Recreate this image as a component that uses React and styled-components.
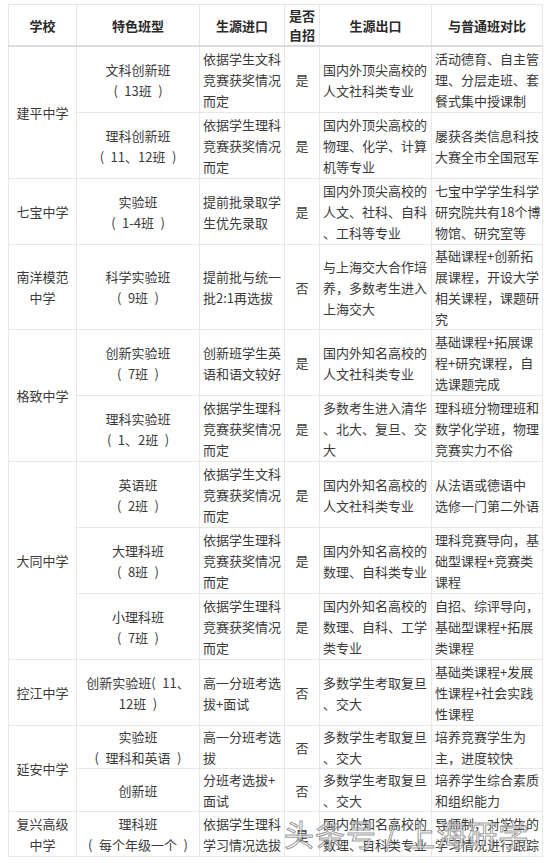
import React from "react";
import styled, { createGlobalStyle } from "styled-components";

const Global = createGlobalStyle`
  html, body { margin: 0; padding: 0; background: #fff; }
  body { font-family: "Noto Sans CJK SC", "Noto Sans", sans-serif; color: #333; }
`;

const Page = styled.div`
  position: relative;
  padding: 4px 8px;
  width: 550px;
  box-sizing: border-box;
`;

const Table = styled.table`
  width: 535px;
  table-layout: fixed;
  border-collapse: collapse;
  font-size: 13px;
  line-height: 21px;
`;

const HeadCell = styled.th`
  border: 1px solid #e6e6e6;
  border-bottom: 2px solid #dcdcdc;
  font-weight: bold;
  color: #2a2a2a;
  line-height: 19px;
  padding: 1px 0;
  text-align: center;
  vertical-align: middle;
  white-space: nowrap;
`;

const Cell = styled.td`
  border: 1px solid #e8e8e8;
  padding: ${(p) => (p.$tight ? "0" : "1px")} ${(p) => (p.$align === "left" ? "3px" : "0")};
  text-align: ${(p) => p.$align || "center"};
  vertical-align: middle;
  white-space: pre;
  color: #3a3a3a;
`;

const Watermark = styled.div`
  position: absolute;
  left: 284px;
  top: 815px;
  font-size: 30px;
  line-height: 36px;
  font-family: "Noto Sans CJK SC", sans-serif;
  font-weight: normal;
  color: rgba(255, 255, 255, 0.6);
  -webkit-text-stroke: 1px rgba(110, 110, 110, 0.7);
  letter-spacing: 1px;
  white-space: nowrap;
  pointer-events: none;
`;

const cols = [68, 123, 85, 35, 112, 111];

const O = "(\u2002";
const C = "\u2002)";

const Lines = ({ t }) =>
  t.split("/").map((l, i, a) => (
    <React.Fragment key={i}>
      {l.replace(/（/g, O).replace(/）/g, C)}
      {i < a.length - 1 && <br />}
    </React.Fragment>
  ));

const rows = [
  { school: "建平中学", span: 2, c: ["文科创新班/（13班）", "依据学生文科/竞赛获奖情况/而定", "是", "国内外顶尖高校的/人文社科类专业", "活动德育、自主管/理、分层走班、套/餐式集中授课制"] },
  { c: ["理科创新班/（11、12班）", "依据学生理科/竞赛获奖情况/而定", "是", "国内外顶尖高校的/物理、化学、计算/机等专业", "屡获各类信息科技/大赛全市全国冠军"] },
  { school: "七宝中学", span: 1, c: ["实验班/（1-4班）", "提前批录取学/生优先录取", "是", "国内外顶尖高校的/人文、社科、自科/、工科等专业", "七宝中学学生科学/研究院共有18个博/物馆、研究室等"] },
  { school: "南洋模范/中学", span: 1, tight: true, c: ["科学实验班/（9班）", "提前批与统一/批2:1再选拔", "否", "与上海交大合作培/养，多数考生进入/上海交大", "基础课程+创新拓/展课程，开设大学/相关课程，课题研/究"] },
  { school: "格致中学", span: 2, c: ["创新实验班/（7班）", "创新班学生英/语和语文较好", "是", "国内外知名高校的/人文社科类专业", "基础课程+拓展课/程+研究课程，自/选课题完成"] },
  { c: ["理科实验班/（1、2班）", "依据学生理科/竞赛获奖情况/而定", "是", "多数考生进入清华/、北大、复旦、交/大", "理科班分物理班和/数学化学班，物理/竞赛实力不俗"] },
  { school: "大同中学", span: 3, c: ["英语班/（2班）", "依据学生文科/竞赛获奖情况/而定", "是", "国内外知名高校的/人文社科类专业", "从法语或德语中/选修一门第二外语"] },
  { c: ["大理科班/（8班）", "依据学生理科/竞赛获奖情况/而定", "是", "国内外知名高校的/数理、自科类专业", "理科竞赛导向，基/础型课程+竞赛类/课程"] },
  { c: ["小理科班/（7班）", "依据学生理科/竞赛获奖情况/而定", "是", "国内外知名高校的/数理、自科、工学/类专业", "自招、综评导向，/基础型课程+拓展/类课程"] },
  { school: "控江中学", span: 1, c: ["创新实验班（11、/12班）", "高一分班考选/拔+面试", "否", "多数学生考取复旦/、交大", "基础类课程+发展/性课程+社会实践/性课程"] },
  { school: "延安中学", span: 2, tight: true, c: ["实验班/（理科和英语）", "高一分班考选/拔", "否", "多数学生考取复旦/、交大", "培养竞赛学生为/主，进度较快"] },
  { tight: true, c: ["创新班", "分班考选拔+/面试", "否", "多数学生考取复旦/、交大", "培养学生综合素质/和组织能力"] },
  { school: "复兴高级/中学", span: 1, c: ["理科班/（每个年级一个）", "依据学生理科/学习情况选拔", "是", "国内外知名高校的/数理、自科类专业", "导师制，对学生的/学习情况进行跟踪"] },
];

const aligns = ["center", "left", "center", "left", "left"];

export default function App() {
  return (
    <Page>
      <Global />
      <Table>
        <colgroup>
          {cols.map((w, i) => (
            <col key={i} style={{ width: w }} />
          ))}
        </colgroup>
        <thead>
          <tr>
            <HeadCell>学校</HeadCell>
            <HeadCell>特色班型</HeadCell>
            <HeadCell>生源进口</HeadCell>
            <HeadCell>是否<br />自招</HeadCell>
            <HeadCell>生源出口</HeadCell>
            <HeadCell>与普通班对比</HeadCell>
          </tr>
        </thead>
        <tbody>
          {rows.map((r, i) => (
            <tr key={i}>
              {r.school && (
                <Cell rowSpan={r.span}>
                  <Lines t={r.school} />
                </Cell>
              )}
              {r.c.map((t, j) => (
                <Cell key={j} $align={aligns[j]} $tight={r.tight}>
                  <Lines t={t} />
                </Cell>
              ))}
            </tr>
          ))}
        </tbody>
      </Table>
      <Watermark>头条号 / 上海研学</Watermark>
    </Page>
  );
}
